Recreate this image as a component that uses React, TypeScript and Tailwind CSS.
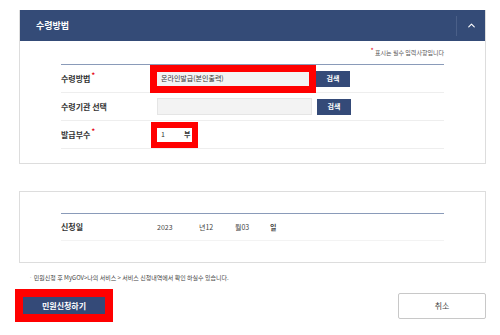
import { ChevronUp } from "lucide-react";

const font = { fontFamily: '"Noto Sans CJK KR", "Noto Sans", sans-serif' };

function Req() {
  return <span className="relative -top-[4px] ml-[1px] text-[7px] text-[#e60012]">*</span>;
}

function Row({ label, req, children }: { label: string; req?: boolean; children: React.ReactNode }) {
  return (
    <div className="flex h-[28px] items-center border-b border-[#eeeeee]">
      <div className="w-[96px] text-[8px] font-bold text-[#333]">
        {label}
        {req && <Req />}
      </div>
      <div className="flex flex-1 items-center">{children}</div>
    </div>
  );
}

function SearchBtn() {
  return (
    <button className="flex h-[16px] w-[34px] items-center justify-center bg-[#344a78] text-[7px] font-bold text-white">
      검색
    </button>
  );
}

export default function App() {
  return (
    <div className="h-[335px] w-[500px] overflow-hidden bg-white" style={font}>
      <div className="pl-[19px] pt-[10px]">
        <section className="w-[467px] border border-t-0 border-[#dddddd]">
          <div className="flex h-[31px] items-center justify-between bg-[#344b77] pl-[16px]">
            <h3 className="text-[9px] font-bold text-white">수령방법</h3>
            <div className="flex h-[20px] w-[29px] items-center justify-center border-l border-[#4a5f88]">
              <ChevronUp className="h-[11px] w-[11px] text-white" strokeWidth={2.5} />
            </div>
          </div>
          <div className="pb-[14px] pl-[41px] pr-[41px]">
            <p className="pt-[6px] text-right text-[6px] leading-[10px] text-[#555]">
              <span className="relative -top-[2px] text-[7px] text-[#e60012]">*</span> 표시는 필수 입력사항입니다
            </p>
            <div className="mt-[6px] border-t border-[#8a9bb9]">
              <Row label="수령방법" req>
                <div className="-ml-[7px] border-[7px] border-[#ff0000]">
                  <div className="flex h-[14px] w-[152px] items-center bg-[#f3f3f3] pl-[4px] text-[7px] text-[#333]">
                    온라인발급(본인출력)
                  </div>
                </div>
                <SearchBtn />
              </Row>
              <Row label="수령기관 선택">
                <div className="mr-[5px] h-[17px] w-[155px] border border-[#e5e5e5] bg-[#f3f3f3]" />
                <SearchBtn />
              </Row>
              <Row label="발급부수" req>
                <div className="-ml-[6px] flex items-center border-[6px] border-[#ff0000] bg-white">
                  <div className="flex h-[14px] w-[27px] items-center pl-[4px] text-[7px] text-[#333]">1</div>
                  <span className="pr-[2px] text-[7px] font-bold text-[#333]">부</span>
                </div>
              </Row>
            </div>
          </div>
        </section>

        <section className="mt-[27px] h-[72px] w-[467px] border border-[#dddddd] pl-[41px] pr-[41px] pt-[21px]">
          <div className="flex h-[28px] items-center border-b border-t border-b-[#f3f3f3] border-t-[#8a9bb9]">
            <div className="w-[96px] text-[8px] font-bold text-[#333]">신청일</div>
            <div className="flex items-center text-[7px] text-[#444]">
              <span className="w-[42px]">2023</span>
              <span className="w-[36px]">년12</span>
              <span className="w-[35px]">월03</span>
              <span className="font-bold">일</span>
            </div>
          </div>
        </section>
      </div>

      <p className="mt-[10px] pl-[29px] text-[6px] text-[#444]">
        <span className="text-[#aaa]">·</span> 민원신청 후 MyGOV&gt;나의 서비스 &gt; 서비스 신청내역에서 확인 하실수 있습니다.
      </p>

      <div className="mt-[7px] flex items-start justify-between pl-[15px] pr-[14px]">
        <div className="border-[8px] border-[#ff0000]">
          <button className="flex h-[17px] w-[82px] items-center justify-center bg-[#344a78] text-[8px] font-bold text-white">
            민원신청하기
          </button>
        </div>
        <button className="mt-[4px] flex h-[26px] w-[88px] items-center justify-center rounded-[2px] border border-[#c8c8c8] bg-white text-[8px] text-[#444]">
          취소
        </button>
      </div>
    </div>
  );
}
